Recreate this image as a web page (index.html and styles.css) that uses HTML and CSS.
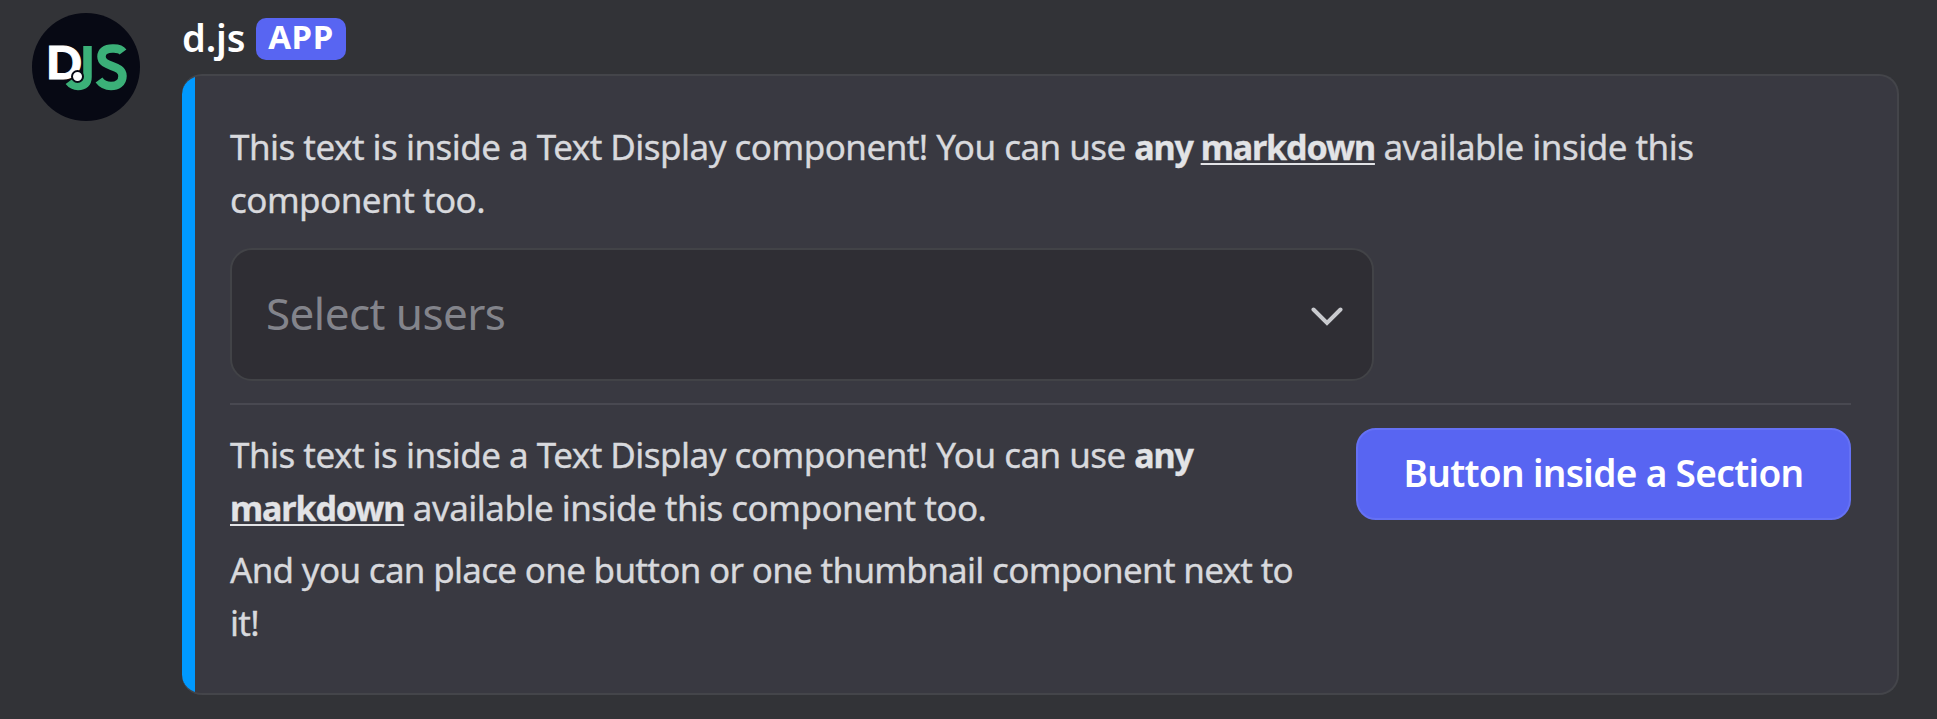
FILE: index.html
```html
<!DOCTYPE html>
<html lang="en">
<head>
<meta charset="utf-8">
<title>d.js</title>
<link rel="stylesheet" href="styles.css">
</head>
<body>
<article class="message">
  <svg class="avatar" viewBox="0 0 108 108" role="img" aria-label="d.js">
    <circle cx="54" cy="54" r="54" fill="#070914"/>
    <g fill="none" stroke="#3bb078" stroke-width="8.5">
      <path d="M55.5 33V64Q55.5 73 46 73Q40.500 73 37 68.500"/>
      <path d="M91 39C88 35 84 35.500 80.500 35.500C73 35.500 69.500 39 69.500 43.500C69.500 55 90.500 51 90.500 63C90.500 70 85 73 79 73C74 73 70 71 67 67"/>
    </g>
    <text class="logo-d" x="14" y="65.5" textLength="36" lengthAdjust="spacingAndGlyphs">D</text>
    <circle cx="45.5" cy="63.500" r="5.500" fill="#fff" stroke="#070914" stroke-width="2"/>
  </svg>
  <div class="body">
    <header class="author">
      <span class="name">d.js</span>
      <span class="tag">APP</span>
    </header>
    <section class="card">
      <p class="text">This text is inside a Text Display component! You can use <strong>any <u>markdown</u></strong> available inside this component too.</p>
      <div class="select">
        <span>Select users</span>
        <svg class="chevron" viewBox="0 0 32 20"><path d="M2.500 2.500 16 16 29.500 2.500" fill="none" stroke="#c9cace" stroke-width="4" stroke-linecap="round" stroke-linejoin="miter"/></svg>
      </div>
      <hr class="divider">
      <div class="section">
        <div class="section-text">
          <p class="text">This text is inside a Text Display component! You can use <strong>any <u>markdown</u></strong> available inside this component too.</p>
          <p class="text text-tight">And you can place one button or one thumbnail component next to it!</p>
        </div>
        <button class="button" type="button">Button inside a Section</button>
      </div>
    </section>
  </div>
</article>
</body>
</html>
```
FILE: styles.css
```css
* { box-sizing: border-box; }

body {
  margin: 0;
  height: 719px;
  overflow: hidden;
  background: #323337;
  color: #d8d9dd;
  font-family: "Noto Sans", "Open Sans", sans-serif;
}

.message {
  display: flex;
  gap: 42px;
  padding: 13px 38px 0 32px;
}

.avatar {
  flex: none;
  width: 108px;
  height: 108px;
}

.logo-d {
  fill: #fff;
  stroke: #fff;
  stroke-width: 1;
  font: 900 46px Lato, sans-serif;
}

.body { flex: 1; min-width: 0; }

.author {
  display: flex;
  align-items: flex-start;
  gap: 10px;
  height: 61px;
  padding-top: 5px;
}

.name {
  width: 64px;
  color: #fff;
  font-size: 38px;
  font-weight: 600;
  line-height: 38px;
  letter-spacing: -0.1px;
}

.tag {
  width: 90px;
  height: 42px;
  border-radius: 10px;
  background: #5865f2;
  color: #fff;
  font-size: 33px;
  font-weight: 700;
  line-height: 37px;
  letter-spacing: 0.6px;
  text-align: center;
}

.card {
  height: 621px;
  padding: 44px 46px 0 48px;
  border: 2px solid #44454a;
  border-left: 0;
  border-radius: 20px;
  background: linear-gradient(90deg, #0099ff 13px, #393941 13px);
}

.text {
  margin: 0;
  font-size: 35px;
  line-height: 53px;
  letter-spacing: -0.53px;
  -webkit-text-stroke: 0.35px currentColor;
}

.text-tight { letter-spacing: -0.7px; }

.text strong {
  color: #e2e3e6;
  font-size: 34px;
  font-weight: 700;
  line-height: 1;
  letter-spacing: -1.1px;
}

.text u {
  text-decoration-thickness: 2px;
  text-underline-offset: 3px;
  text-decoration-skip-ink: none;
}

.select {
  display: flex;
  align-items: center;
  justify-content: space-between;
  width: 1144px;
  height: 133px;
  margin-top: 22px;
  padding: 0 29px 3px 34px;
  border: 2px solid #424347;
  border-radius: 22px;
  background: #2f2e34;
  color: #83848b;
  font-size: 44px;
  letter-spacing: -0.55px;
}

.chevron {
  width: 32px;
  height: 20px;
  margin-top: 7px;
}

.divider {
  height: 2px;
  margin: 22px 0 23px;
  border: 0;
  background: #494951;
}

.section {
  display: flex;
  align-items: flex-start;
  justify-content: space-between;
}

.section-text {
  display: grid;
  gap: 9px;
  width: 1080px;
}

.button {
  width: 495px;
  height: 92px;
  padding: 0 0 3px;
  border: 2px solid #6571f4;
  border-radius: 20px;
  background: #5865f2;
  color: #fff;
  font: 580 37px "Noto Sans", "Open Sans", sans-serif;
  letter-spacing: -0.65px;
}
```
